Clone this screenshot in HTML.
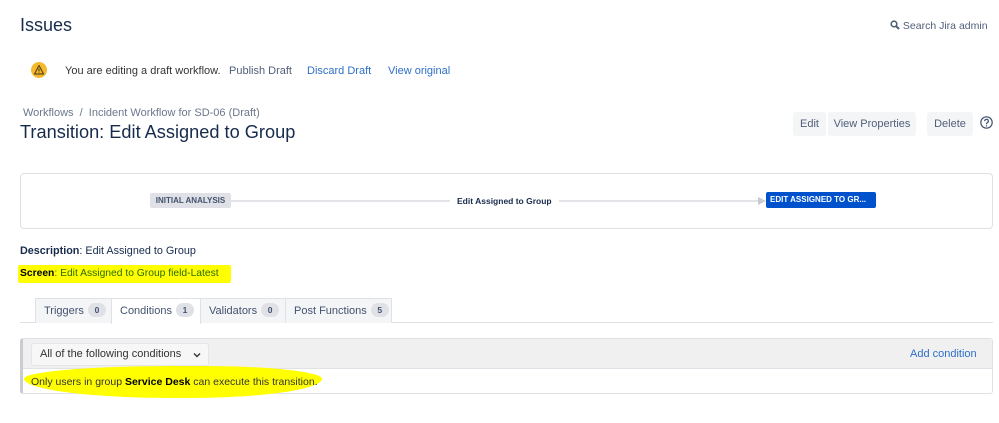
<!DOCTYPE html>
<html><head><meta charset="utf-8"><style>
*{box-sizing:border-box;margin:0;padding:0}
body{width:999px;height:423px;background:#fff;font-family:"Liberation Sans",sans-serif;color:#172b4d;position:relative;overflow:hidden;font-size:11px}
.a{position:absolute;white-space:nowrap}
.btn{position:absolute;background:#f4f5f7;border-radius:3px;color:#505f79;font-size:11px;text-align:center;line-height:24px;height:24px;top:112px}
.link{color:#2f6fc9}
.tab{position:absolute;top:298px;height:25px;border:1px solid #dfe1e6;border-bottom:none;background:#f4f5f7;color:#42526e;font-size:11px;line-height:24px;padding-left:8px;white-space:nowrap}
.tab.act{background:#fff;height:26px}
.cnt{display:inline-block;background:#dfe1e6;border-radius:8px;font-size:8.5px;font-weight:bold;line-height:14px;width:18px;text-align:center;margin-left:4px;vertical-align:1px;color:#42526e}
</style></head><body>
<div class="a" style="left:20px;top:15px;font-size:18px">Issues</div>
<div class="a" style="left:890px;top:20px;font-size:10.5px;color:#505f79"><svg width="10" height="10" viewBox="0 0 10 10" style="vertical-align:-1px"><circle cx="4" cy="4" r="2.8" fill="none" stroke="#505f79" stroke-width="1.6"/><path d="M6 6L9 9" stroke="#505f79" stroke-width="2"/></svg> Search Jira admin</div>
<svg class="a" style="left:31px;top:62px" width="16" height="16" viewBox="0 0 16 16"><circle cx="8" cy="8" r="8" fill="#f5b82e"/><path d="M8 3.5L12.5 12H3.5Z" fill="none" stroke="#5e4a12" stroke-width="1.2" stroke-linejoin="round"/><path d="M8 6.5V9.5M8 10.5V11" stroke="#5e4a12" stroke-width="1.2"/></svg>
<div class="a" style="left:65px;top:65px;color:#333">You are editing a draft workflow.</div>
<div class="a" style="left:229px;top:65px;color:#505f79">Publish Draft</div>
<div class="a link" style="left:307px;top:65px">Discard Draft</div>
<div class="a link" style="left:388px;top:65px">View original</div>
<div class="a" style="left:23px;top:107px;font-size:11px;color:#6b778c">Workflows&nbsp;&nbsp;/&nbsp;&nbsp;Incident Workflow for SD-06 (Draft)</div>
<div class="a" style="left:20px;top:122px;font-size:18.2px">Transition: Edit Assigned to Group</div>
<div class="btn" style="left:793px;width:33px">Edit</div>
<div class="btn" style="left:828px;width:88px">View Properties</div>
<div class="btn" style="left:927px;width:46px">Delete</div>
<svg class="a" style="left:980px;top:116px" width="13" height="13" viewBox="0 0 13 13"><circle cx="6.5" cy="6.5" r="5.7" fill="none" stroke="#42526e" stroke-width="1.2"/><path d="M4.7 5.2a1.8 1.8 0 1 1 2.4 1.6c-.5.2-.6.5-.6 1V8.3" fill="none" stroke="#42526e" stroke-width="1.2"/><circle cx="6.5" cy="10" r=".7" fill="#42526e"/></svg>
<div class="a" style="left:20px;top:173px;width:973px;height:56px;border:1px solid #dfe1e6;border-radius:4px"></div>
<div class="a" style="left:150px;top:193px;width:81px;height:15px;background:#dfe1e6;border-radius:2px;font-size:8px;font-weight:bold;color:#42526e;text-align:center;line-height:15px">INITIAL ANALYSIS</div>
<div class="a" style="left:231px;top:200px;width:528px;height:2px;background:#e3e4e8"></div>
<div class="a" style="left:450px;top:194px;background:#fff;padding:0 7px;font-size:8.5px;font-weight:bold;line-height:14px">Edit Assigned to Group</div>
<div class="a" style="left:758px;top:197px;width:0;height:0;border-left:8px solid #c8cad0;border-top:4px solid transparent;border-bottom:4px solid transparent"></div>
<div class="a" style="left:766px;top:192px;width:110px;height:16px;background:#0052cc;border-radius:2px;font-size:8px;font-weight:bold;color:#fff;line-height:16px;padding-left:4px">EDIT ASSIGNED TO GR...</div>
<div class="a" style="left:20px;top:245px;font-size:10.8px"><b>Description</b>: Edit Assigned to Group</div>
<div class="a" style="left:18px;top:265px;width:213px;height:18px;background:#ffff00;border-radius:2px"></div>
<div class="a" style="left:20px;top:268px;color:#2a6a00;font-size:10.3px"><b style="color:#000">Screen</b>: Edit Assigned to Group field-Latest</div>
<div class="a" style="left:20px;top:322px;width:973px;height:1px;background:#dfe1e6"></div>
<div class="tab" style="left:35px;width:77px">Triggers<span class="cnt">0</span></div>
<div class="tab act" style="left:111px;width:90px">Conditions<span class="cnt">1</span></div>
<div class="tab" style="left:200px;width:86px">Validators<span class="cnt">0</span></div>
<div class="tab" style="left:285px;width:107px">Post Functions<span class="cnt">5</span></div>
<div class="a" style="left:20px;top:338px;width:973px;height:56px;border:1px solid #dfe1e6;border-left:3px solid #c9ccd2;border-radius:3px;background:#fff"></div>
<div class="a" style="left:23px;top:339px;width:969px;height:30px;background:#f0f0f0;border-bottom:1px solid #dfe1e6"></div>
<div class="a" style="left:31px;top:343px;width:178px;height:23px;background:#f7f7f8;border:1px solid #e4e5e8;border-radius:3px;line-height:21px;padding-left:8px;color:#333">All of the following conditions<svg style="position:absolute;right:7px;top:8px" width="8" height="6" viewBox="0 0 8 6"><path d="M1 1.5L4 4.5L7 1.5" fill="none" stroke="#333" stroke-width="1.4"/></svg></div>
<div class="a link" style="left:910px;top:348px">Add condition</div>
<div class="a" style="left:24px;top:366px;width:298px;height:32px;background:#ffff00;border-radius:50% 40% 45% 50%/40% 40% 60% 60%"></div>
<div class="a" style="left:31px;top:376px;color:#333;font-size:10.5px">Only users in group <b style="color:#000">Service Desk</b> can execute this transition.</div>
</body></html>
